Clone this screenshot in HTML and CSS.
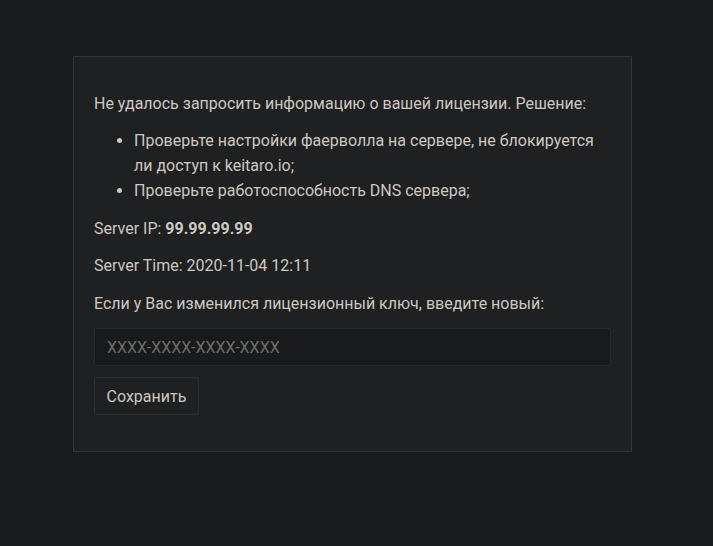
FILE: index.html
```html
<!DOCTYPE html>
<html lang="ru">
<head>
  <meta charset="UTF-8" />
  <title>Лицензия</title>
  <link rel="stylesheet" href="styles.css">
</head>
<body>

  <div class="panel">
    <p>Не удалось запросить информацию о вашей лицензии. Решение:</p>
    <ul>
      <li>Проверьте настройки фаерволла на сервере, не блокируется ли доступ к keitaro.io;</li>
      <li>Проверьте работоспособность DNS сервера;</li>
    </ul>
    <p>Server IP: <b>99.99.99.99</b></p>
    <p>Server Time: 2020-11-04 12:11</p>
    <p>Если у Вас изменился лицензионный ключ, введите новый:</p>

    <form class="key-form">
      <input type="text" placeholder="XXXX-XXXX-XXXX-XXXX" />
      <div>
        <button type="submit">Сохранить</button>
      </div>
    </form>
  </div>

</body>
</html>
```

FILE: styles.css
```css
body {
  margin: 0;
  padding: 56px 0;
  background-color: #181a1b;
  font-family: Roboto, "Liberation Sans", sans-serif;
  font-size: 16px;
  line-height: 25px;
  color: #cdc8c1;
}

.panel {
  margin-left: 73px;
  width: 517px;
  padding: 21px 20px 36px;
  background-color: #1f2022;
  border: 1px solid #333538;
}

p {
  margin: 12.5px 0;
}

b {
  font-weight: bold;
}

ul {
  margin: 12.5px 0;
  padding-left: 40px;
}

.key-form {
  display: flex;
  flex-direction: column;
  gap: 11px;
  margin-top: 12.5px;
}

.key-form input {
  height: 38px;
  box-sizing: border-box;
  padding: 0 12px;
  font-family: inherit;
  font-size: 16px;
  color: #cdc8c1;
  background-color: #181a1b;
  border: 1px solid #27292b;
  border-radius: 2px;
}

.key-form input::placeholder {
  color: #6e6c68;
}

.key-form input:focus {
  outline: none;
}

.key-form button {
  height: 38px;
  padding: 0 11.5px;
  font-family: inherit;
  font-size: 16px;
  color: #cdc8c1;
  background-color: #1f2022;
  border: 1px solid #2c2e30;
  border-radius: 2px;
  cursor: pointer;
}
```
